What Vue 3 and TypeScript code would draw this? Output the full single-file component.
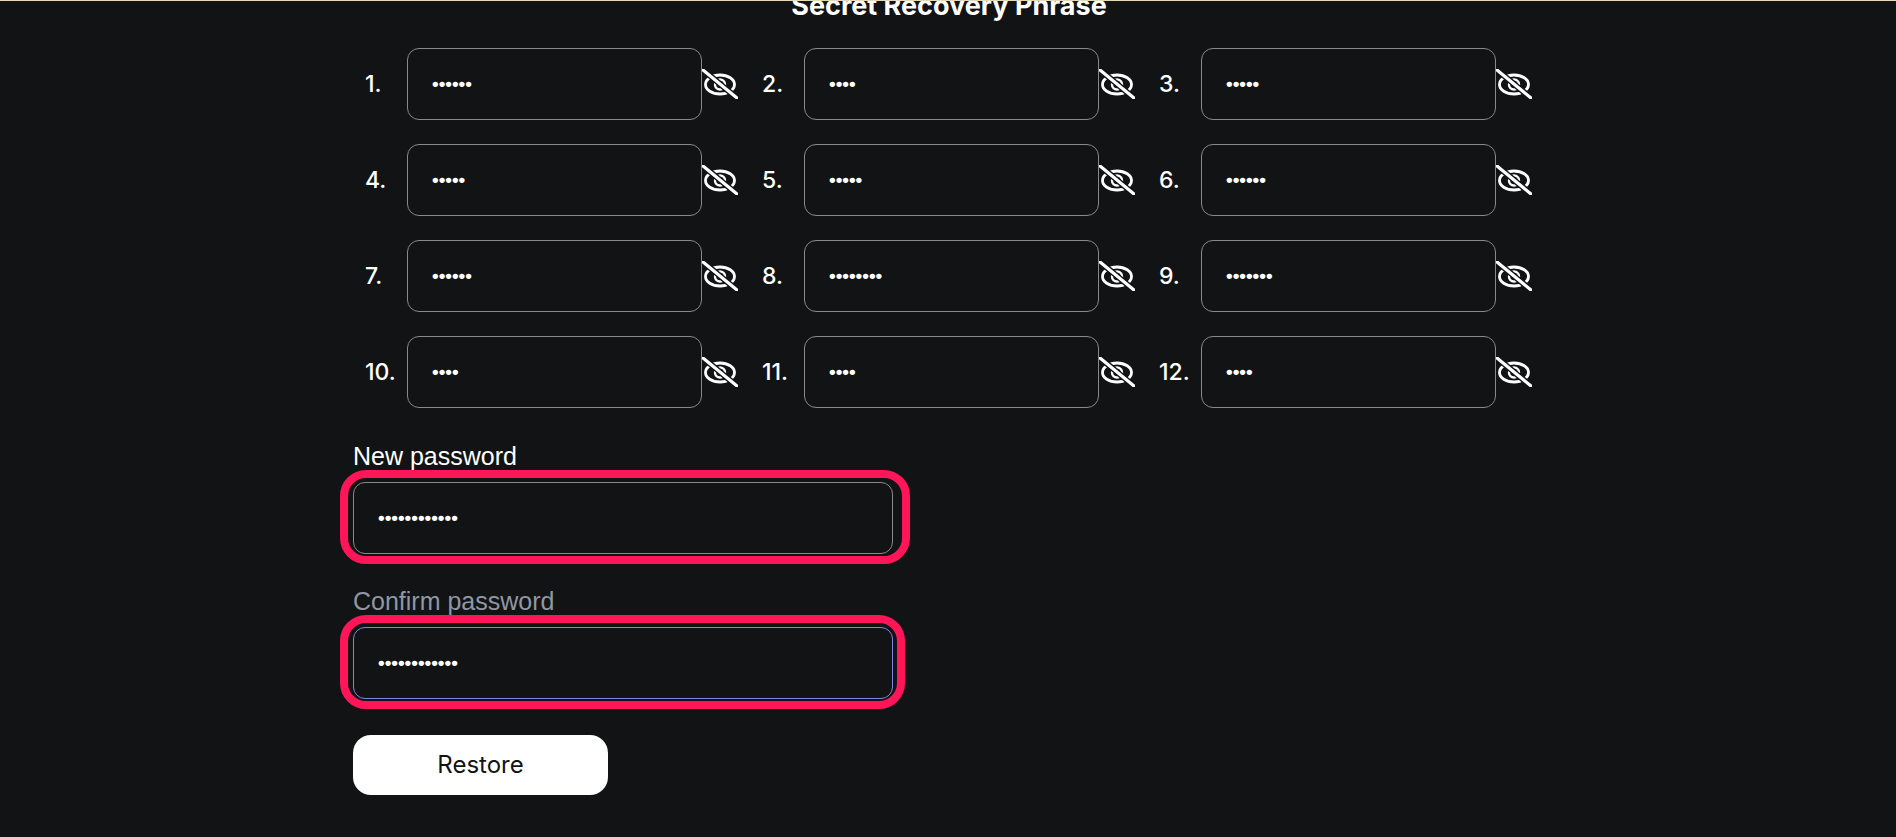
<template>
  <div class="page">
    <h2 class="title">Secret Recovery Phrase</h2>

    <div class="words">
      <div v-for="(word, i) in words" :key="i" class="word">
        <span class="num">{{ i + 1 }}.</span>
        <input class="field" type="password" :value="word" readonly />
        <svg class="eye" viewBox="0 0 36 30" fill="none" stroke-linecap="round">
          <ellipse cx="18" cy="15.500" rx="14.500" ry="9.500" stroke="#fff" stroke-width="2.800" />
          <circle cx="18" cy="15.500" r="5" stroke="#fff" stroke-width="2.400" />
          <path d="M1 1l34 28" stroke="#111315" stroke-width="6" stroke-linecap="butt" />
          <path d="M1 1l34 28" stroke="#fff" stroke-width="3.200" />
        </svg>
      </div>
    </div>

    <div class="pw-block">
      <label class="pw-label">New password</label>
      <div class="pw-wrap">
        <input class="field wide" type="password" value="aaaaaaaaaaaa" readonly />
        <div class="mark"></div>
      </div>
    </div>

    <div class="pw-block second">
      <label class="pw-label muted">Confirm password</label>
      <div class="pw-wrap">
        <input class="field wide focused" type="password" value="aaaaaaaaaaaa" readonly />
        <div class="mark narrow"></div>
      </div>
    </div>

    <button class="restore" type="button">Restore</button>
  </div>
</template>

<script setup lang="ts">
const words: string[] = [
  'aaaaaa', 'aaaa', 'aaaaa',
  'aaaaa', 'aaaaa', 'aaaaaa',
  'aaaaaa', 'aaaaaaaa', 'aaaaaaa',
  'aaaa', 'aaaa', 'aaaa',
]
</script>

<style>
html,
body {
  margin: 0;
  background: #111315;
  overflow: hidden;
}
</style>

<style scoped>
.page {
  box-sizing: border-box;
  height: 837px;
  overflow: hidden;
  padding: 0 0 0 353px;
  background: #111315;
  border-top: 1px solid #e8d9b8;
  color: #fff;
  font-family: Inter, "Liberation Sans", sans-serif;
}

.title {
  width: 1192px;
  margin: -10px 0 0;
  text-align: center;
  font-size: 27px;
  line-height: 30px;
  font-weight: 700;
  font-family: Inter, sans-serif;
}

.words {
  display: grid;
  grid-template-columns: repeat(3, 397px);
  row-gap: 24px;
  margin: 27px 0 0 12px;
}

.word {
  display: flex;
  align-items: center;
  height: 72px;
}

.num {
  width: 42px;
  font-size: 23px;
  line-height: 26px;
  font-weight: 500;
  font-family: Inter, sans-serif;
}

.field {
  box-sizing: border-box;
  width: 295px;
  height: 72px;
  padding: 0 24px;
  background: transparent;
  border: 1px solid #8a8a8a;
  border-radius: 12px;
  outline: none;
  color: #fff;
  font-size: 19px;
  font-weight: 700;
  font-family: "Liberation Sans", sans-serif;
}

.eye {
  width: 36px;
  height: 30px;
  flex: none;
}

.pw-block {
  margin-top: 33px;
}

.pw-block.second {
  margin-top: 32px;
}

.pw-label {
  display: block;
  height: 30px;
  line-height: 30px;
  font-size: 25px;
  font-family: "Liberation Sans", sans-serif;
}

.pw-label.muted {
  color: #8f97a3;
}

.pw-wrap {
  position: relative;
  width: 540px;
  margin-top: 11px;
}

.field.wide {
  display: block;
  width: 540px;
}

.field.focused {
  border-color: #8185e0;
}

.mark {
  position: absolute;
  top: -12px;
  left: -13px;
  width: 570px;
  height: 94px;
  box-sizing: border-box;
  border: 8px solid #ff1558;
  border-radius: 26px;
  pointer-events: none;
}

.mark.narrow {
  width: 565px;
}

.restore {
  display: block;
  width: 255px;
  height: 60px;
  margin-top: 36px;
  padding: 0 0 2px;
  border: none;
  border-radius: 18px;
  background: #fff;
  color: #111315;
  font-size: 24px;
  font-family: Inter, sans-serif;
}
</style>
